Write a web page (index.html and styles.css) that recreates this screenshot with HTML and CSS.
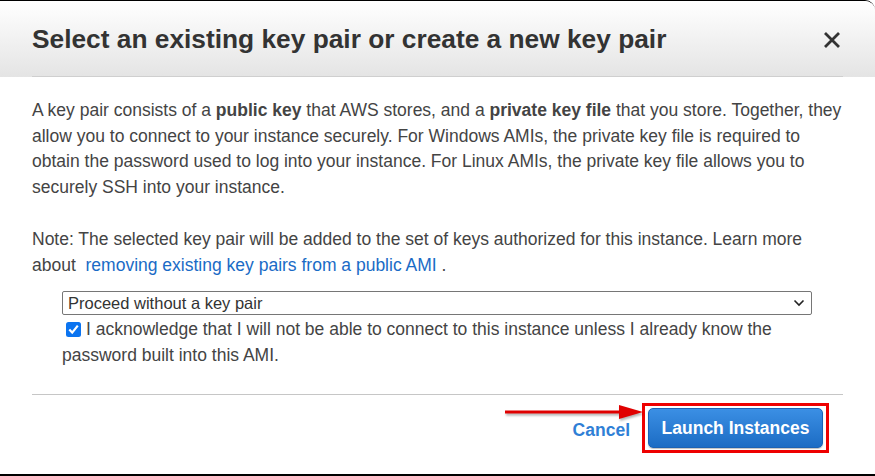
FILE: index.html
```html
<!DOCTYPE html>
<html>
<head>
<meta charset="utf-8">
<link rel="stylesheet" href="styles.css">
</head>
<body>
<div class="modal">
  <div class="header">
    <h1 class="title">Select an existing key pair or create a new key pair</h1>
    <svg class="close" width="18" height="18" viewBox="0 0 18 18"><path d="M2 2 L16 16 M16 2 L2 16" stroke="#333" stroke-width="2.8" stroke-linecap="butt"/></svg>
  </div>
  <div class="body">
    <p class="para">A key pair consists of a <b>public key</b> that AWS stores, and a <b>private key file</b> that you store. Together, they allow you to connect to your instance securely. For Windows AMIs, the private key file is required to obtain the password used to log into your instance. For Linux AMIs, the private key file allows you to securely SSH into your instance.</p>
    <p class="para note">Note: The selected key pair will be added to the set of keys authorized for this instance. Learn more about &nbsp;<a class="link">removing existing key pairs from a public AMI</a>&nbsp;.</p>
    <div class="indent">
      <div class="select">
        <span>Proceed without a key pair</span>
        <svg class="chev" width="12" height="8" viewBox="0 0 12 8"><path d="M1.5 1.5 L6 6 L10.5 1.5" fill="none" stroke="#222" stroke-width="1.6"/></svg>
      </div>
      <p class="ack"><span class="check"><svg width="15" height="15" viewBox="0 0 15 15"><rect x="0" y="0" width="15" height="15" rx="2.5" fill="#0b74f0"/><path d="M3.3 7.6 L6.2 10.6 L11.8 3.6" fill="none" stroke="#fff" stroke-width="2.2"/></svg></span>I acknowledge that I will not be able to connect to this instance unless I already know the password built into this AMI.</p>
    </div>
  </div>
  <div class="footer">
    <a class="cancel">Cancel</a>
    <div class="highlight">
      <button class="launch">Launch Instances</button>
      <svg class="arrow" width="140" height="18" viewBox="0 0 140 18"><path d="M0 8 L116 8" stroke="#e00000" stroke-width="3"/><path d="M114 1 L138 8 L114 15 Z" fill="#e00000"/></svg>
    </div>
  </div>
</div>
</body>
</html>
```
FILE: styles.css
```css
html, body {
  margin: 0;
  padding: 0;
  background: #fff;
}
.modal {
  width: 875px;
  height: 476px;
  box-sizing: border-box;
  border-top: 1px solid #000;
  border-bottom: 2px solid #000;
  border-top-right-radius: 10px;
  overflow: hidden;
  font-family: "Liberation Sans", Arial, sans-serif;
  color: #444;
  display: flex;
  flex-direction: column;
}
.header {
  height: 76px;
  box-sizing: border-box;
  background: linear-gradient(#ffffff, #e4e4e4);
  display: flex;
  align-items: center;
  justify-content: space-between;
  padding: 0 34px 0 32px;
  position: relative;
}
.header::after {
  content: "";
  position: absolute;
  left: 32px;
  right: 32px;
  bottom: 0;
  height: 1px;
  background: #cfcfcf;
}
.title {
  margin: 0;
  font-family: "Liberation Sans", Arial, sans-serif;
  font-weight: bold;
  font-size: 26.3px;
  color: #333;
  white-space: nowrap;
  padding-top: 1px;
}
.close {
  display: block;
  margin-top: 2px;
}
.body {
  padding: 21px 32px 0 32px;
}
.para {
  margin: 0 0 26px 0;
  font-size: 17.5px;
  line-height: 25.7px;
}
.para.note {
  margin-bottom: 13px;
}
.link {
  color: #1a6bc6;
}
.indent {
  padding-left: 30px;
  padding-right: 31px;
}
.select {
  height: 24px;
  box-sizing: border-box;
  border: 1px solid #767676;
  border-radius: 2px;
  display: flex;
  align-items: center;
  justify-content: space-between;
  padding: 0 6px 0 5px;
  font-size: 16.5px;
  color: #333;
}
.chev {
  display: block;
}
.ack {
  margin: 0;
  font-size: 17.5px;
  line-height: 26px;
  padding-top: 1px;
}
.check {
  display: inline-block;
  margin: 0 5px 0 4px;
  vertical-align: -2px;
}
.check svg {
  display: block;
}
.footer {
  margin: 26px 32px 0 32px;
  border-top: 1px solid #c6c6c6;
  display: flex;
  justify-content: flex-end;
  align-items: center;
  padding: 8px 14px 0 0;
  gap: 12px;
}
.cancel {
  font-weight: bold;
  font-size: 17.5px;
  color: #2f7fd6;
  margin-top: 5px;
}
.highlight {
  border: 3px solid #ee0000;
  padding: 2px 3px;
  position: relative;
}
.launch {
  display: block;
  width: 175px;
  height: 40px;
  border: 1px solid #1b62b4;
  border-radius: 5px;
  background: linear-gradient(#3b8fe4, #1c6cc4);
  color: #fff;
  font-family: "Liberation Sans", Arial, sans-serif;
  font-weight: bold;
  font-size: 17.5px;
  box-shadow: 0 1px 1px rgba(0,0,0,0.25);
}
.arrow {
  position: absolute;
  left: -140px;
  top: -2px;
  filter: drop-shadow(1px 2px 1px rgba(0,0,0,0.3));
}
```
